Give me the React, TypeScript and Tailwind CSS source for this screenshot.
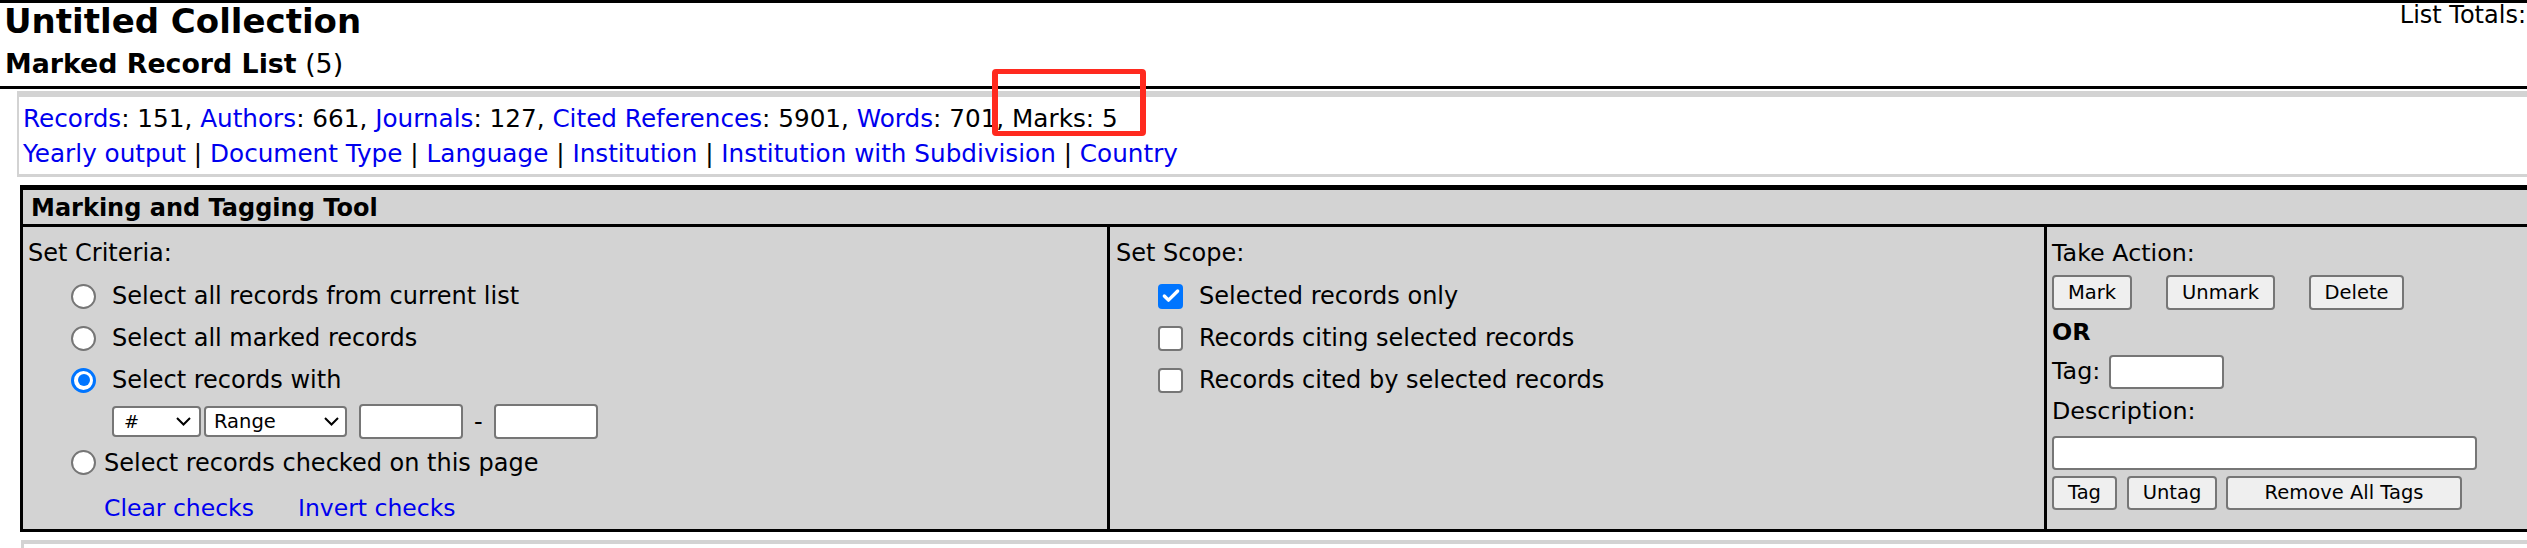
import { Check } from "lucide-react";

const Radio = ({ checked = false }: { checked?: boolean }) => (
    <span
        className={
            checked
                ? "w-[25px] h-[25px] shrink-0 rounded-full border-[3px] border-[#0075ff] bg-white flex items-center justify-center"
                : "w-[25px] h-[25px] shrink-0 rounded-full border-2 border-[#767676] bg-white"
        }
    >
        {checked && <span className="w-[12px] h-[12px] rounded-full bg-[#0075ff]" />}
    </span>
);

const Checkbox = ({ checked = false }: { checked?: boolean }) => (
    <span
        className={
            checked
                ? "w-[25px] h-[25px] shrink-0 rounded-[4px] bg-[#0075ff] flex items-center justify-center"
                : "w-[25px] h-[25px] shrink-0 rounded-[4px] border-2 border-[#767676] bg-white"
        }
    >
        {checked && <Check className="w-[20px] h-[20px] text-white" strokeWidth={4} />}
    </span>
);

const Chevron = () => (
    <svg width="15" height="9" viewBox="0 0 15 9" className="shrink-0">
        <path d="M1 1 L7.5 7.5 L14 1" fill="none" stroke="#000" strokeWidth="2" />
    </svg>
);

const Btn = ({ label, w }: { label: string; w: string }) => (
    <button className={`${w} h-full rounded-[4px] border-2 border-[#767676] bg-[#efefef] text-[19.5px] text-black`}>
        {label}
    </button>
);

const Link = ({ children }: { children: React.ReactNode }) => (
    <a href="#" className="text-[#0000ee]">
        {children}
    </a>
);

const App = () => {
    return (
        <div className="relative w-[2527px] h-[548px] overflow-hidden bg-white text-black font-['DejaVu_Sans',sans-serif]">
            <div className="h-[3px] bg-black" />
            <div className="flex justify-between items-start">
                <h1 className="pl-[4px] text-[34px] font-bold leading-[36px]">Untitled Collection</h1>
                <div className="pr-[1px] text-[24px] leading-[24px]">List Totals:</div>
            </div>
            <div className="pl-[5px] pt-[10px] pb-[7px] text-[26.8px] leading-[30px] border-b-[3px] border-black">
                <b>Marked Record List</b> (5)
            </div>

            <div className="mt-[2px] ml-[17px] w-[2560px] border-[#d3d3d3] border-t-[6px] border-l-2 border-b-[3px] pl-[4px] pt-[4px] pb-[3px] text-[24.7px] leading-[35px]">
                <div>
                    <Link>Records</Link>: 151, <Link>Authors</Link>: 661, <Link>Journals</Link>: 127,{" "}
                    <Link>Cited References</Link>: 5901, <Link>Words</Link>: 701, Marks: 5
                </div>
                <div>
                    <Link>Yearly output</Link> | <Link>Document Type</Link> | <Link>Language</Link> |{" "}
                    <Link>Institution</Link> | <Link>Institution with Subdivision</Link> | <Link>Country</Link>
                </div>
            </div>

            <div className="mt-[8px] ml-[20px] w-[2560px] border-black border-t-[5px] border-x-[3px] border-b-[3px]">
                <div className="h-[37px] bg-[#d3d3d3] border-b-[3px] border-black pl-[8px] pt-[2px] text-[24px] font-bold leading-[32px]">
                    Marking and Tagging Tool
                </div>
                <div className="flex h-[302px] bg-[#d3d3d3] text-[24px]">
                    <div className="w-[1084px] pl-[5px] pt-[10px]">
                        <div className="h-[32px] flex items-center">Set Criteria:</div>
                        <div className="mt-[6px] h-[42px] flex items-center pl-[43px]">
                            <Radio />
                            <span className="ml-[16px]">Select all records from current list</span>
                        </div>
                        <div className="h-[42px] flex items-center pl-[43px]">
                            <Radio />
                            <span className="ml-[16px]">Select all marked records</span>
                        </div>
                        <div className="h-[42px] flex items-center pl-[43px]">
                            <Radio checked />
                            <span className="ml-[16px]">Select records with</span>
                        </div>
                        <div className="h-[41px] flex items-center pl-[84px]">
                            <div className="w-[89px] h-[31px] flex items-center justify-between rounded-[4px] border-2 border-[#767676] bg-white pl-[10px] pr-[8px] text-[18px]">
                                <span>#</span>
                                <Chevron />
                            </div>
                            <div className="ml-[3px] w-[143px] h-[31px] flex items-center justify-between rounded-[4px] border-2 border-[#767676] bg-white pl-[8px] pr-[6px] text-[19.5px]">
                                <span>Range</span>
                                <Chevron />
                            </div>
                            <div className="ml-[12px] w-[104px] h-[35px] rounded-[4px] border-2 border-[#767676] bg-white" />
                            <span className="mx-[11px]">-</span>
                            <div className="w-[104px] h-[35px] rounded-[4px] border-2 border-[#767676] bg-white" />
                        </div>
                        <div className="h-[41px] flex items-center pl-[43px]">
                            <Radio />
                            <span className="ml-[8px]">Select records checked on this page</span>
                        </div>
                        <div className="mt-[4px] h-[44px] flex items-center pl-[76px] gap-[44px] text-[23.5px]">
                            <Link>Clear checks</Link>
                            <Link>Invert checks</Link>
                        </div>
                    </div>

                    <div className="w-[937px] border-l-[3px] border-black pl-[6px] pt-[10px]">
                        <div className="h-[32px] flex items-center">Set Scope:</div>
                        <div className="mt-[6px] h-[42px] flex items-center pl-[42px]">
                            <Checkbox checked />
                            <span className="ml-[16px]">Selected records only</span>
                        </div>
                        <div className="h-[42px] flex items-center pl-[42px]">
                            <Checkbox />
                            <span className="ml-[16px]">Records citing selected records</span>
                        </div>
                        <div className="h-[42px] flex items-center pl-[42px]">
                            <Checkbox />
                            <span className="ml-[16px]">Records cited by selected records</span>
                        </div>
                    </div>

                    <div className="flex-1 border-l-[3px] border-black pl-[5px] pt-[11px] text-[23.8px]">
                        <div className="h-[32px] flex items-center">Take Action:</div>
                        <div className="mt-[5px] h-[35px] flex gap-[34px]">
                            <Btn label="Mark" w="w-[80px]" />
                            <Btn label="Unmark" w="w-[109px]" />
                            <Btn label="Delete" w="w-[95px]" />
                        </div>
                        <div className="mt-[3px] h-[40px] flex items-center font-bold">OR</div>
                        <div className="h-[38px] flex items-center">
                            <span>Tag:</span>
                            <div className="ml-[9px] w-[115px] h-[34px] rounded-[4px] border-2 border-[#767676] bg-white" />
                        </div>
                        <div className="h-[42px] flex items-center">Description:</div>
                        <div className="h-[40px] flex items-center">
                            <div className="w-[425px] h-[34px] rounded-[4px] border-2 border-[#767676] bg-white" />
                        </div>
                        <div className="h-[40px] flex items-center">
                            <div className="h-[34px] flex">
                                <Btn label="Tag" w="w-[65px]" />
                                <div className="ml-[10px] h-full flex">
                                    <Btn label="Untag" w="w-[90px]" />
                                </div>
                                <div className="ml-[9px] h-full flex">
                                    <Btn label="Remove All Tags" w="w-[236px]" />
                                </div>
                            </div>
                        </div>
                    </div>
                </div>
            </div>

            <div className="mt-[8px] ml-[21px] w-[2560px] h-[20px] border-t-4 border-l-[3px] border-[#d3d3d3]" />

            <div className="absolute left-[992px] top-[69px] w-[154px] h-[67px] rounded-[4px] border-x-[6px] border-y-[5px] border-[#ff2a1f]" />
        </div>
    );
};

export default App;
